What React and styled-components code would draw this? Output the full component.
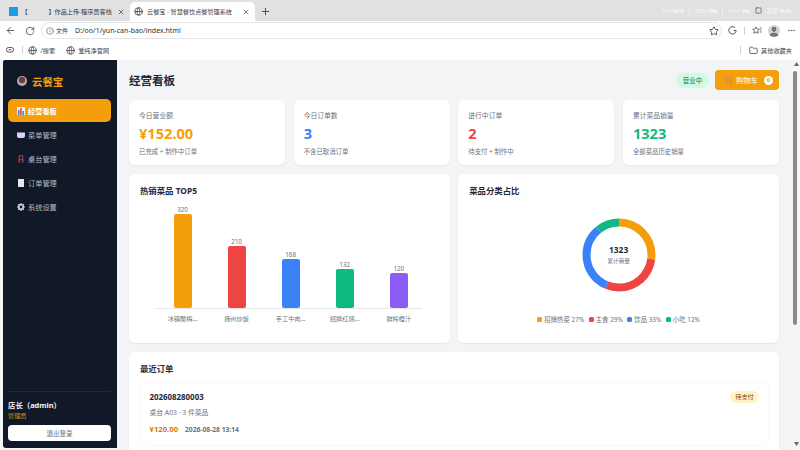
import React from 'react';
import styled, { createGlobalStyle } from 'styled-components';
import { ArrowLeft, RotateCw, Info, Star, X, Plus, MoreHorizontal, Folder, Globe, Square } from 'lucide-react';

const Global = createGlobalStyle`
html, body { margin: 0; padding: 0; background: #fff; }
* { box-sizing: border-box; }
body { font-family: "Noto Sans", "Noto Sans CJK SC", sans-serif; }
`;

const Frame = styled.div`
width: 800px;
height: 450px;
overflow: hidden;
display: flex;
flex-direction: column;
background: #f3f4f6;
`;

const TabBar = styled.div`
height: 21px;
flex: none;
background: #e1e1e1;
display: flex;
align-items: flex-end;
color: #3a3a3a;
font-size: 6.15px;
`;

const Tab = styled.div`
width: ${p => p.$w}px;
height: 19px;
flex: none;
display: flex;
align-items: center;
padding: 0 5px 0 ${p => p.$pad}px;
background: ${p => (p.$active ? '#fff' : 'transparent')};
border-radius: 5px 5px 0 0;
span { flex: 1; white-space: pre; }
`;

const Favicon = styled.i`
width: 8.5px;
height: 9px;
flex: none;
margin-right: 4px;
background: #1e9be8;
`;

const NewTab = styled.div`
margin: 0 0 4px 5px;
display: flex;
color: #444;
`;

const Hud = styled.div`
margin-left: auto;
align-self: center;
display: flex;
align-items: center;
gap: 5px;
padding-right: 9px;
color: #f7f7f7;
font-size: 5.8px;
b { font-weight: 700; }
`;

const HudLine = styled.i`
width: 1px;
height: 8px;
background: #f0f0f0;
`;

const Toolbar = styled.div`
height: 19px;
flex: none;
background: #fff;
display: flex;
align-items: center;
color: #555;
padding: 0 4px 0 5px;
`;

const AddressBar = styled.div`
width: 681px;
height: 17px;
margin-left: 6px;
border: 1px solid #e6e6e6;
border-radius: 9px;
display: flex;
align-items: center;
padding: 0 2px 0 4px;
font-size: 7px;
color: #333;
small { font-size: 6px; margin: 0 7px 0 2px; }
svg:last-child { margin-left: auto; }
`;

const ToolIcons = styled.div`
flex: 1;
display: flex;
align-items: center;
justify-content: space-between;
padding: 0 0 0 6px;
`;

const Divider = styled.i`
width: 1px;
height: ${p => p.$h || 8}px;
background: #cfcfcf;
flex: none;
`;

const Avatar = styled.div`
width: 12px;
height: 12px;
border-radius: 50%;
background: radial-gradient(circle at 50% 36%, #777 0 2.4px, transparent 2.6px),
  radial-gradient(circle at 50% 100%, #777 0 4.4px, transparent 4.6px), #d4d4d4;
`;

const Bookmarks = styled.div`
height: 20px;
flex: none;
background: #fff;
display: flex;
align-items: center;
gap: 5px;
padding: 0 8px 0 6px;
font-size: 6.2px;
color: #444;
`;

const Bookmark = styled.div`
display: flex;
align-items: center;
gap: 3.5px;
margin-right: ${p => p.$mr || 0}px;
`;

const Page = styled.div`
flex: 1;
min-height: 0;
display: flex;
padding-left: 2.5px;
`;

const Sidebar = styled.aside`
width: 114.5px;
height: 388px;
flex: none;
background: #111827;
border-radius: 2px 0 0 3px;
padding: 11px 6px 7px 5.5px;
display: flex;
flex-direction: column;
color: #d1d5db;
`;

const Brand = styled.div`
height: 20px;
display: flex;
align-items: center;
gap: 5px;
padding-left: 9px;
margin-bottom: 8px;
color: #f59e0b;
font-size: 10.4px;
font-weight: 700;
`;

const Nav = styled.nav`
display: flex;
flex-direction: column;
gap: 1px;
`;

const NavItem = styled.div`
height: 23px;
display: flex;
align-items: center;
gap: 3px;
padding-left: 9px;
border-radius: 5px;
font-size: 7.2px;
font-weight: ${p => (p.$active ? 700 : 400)};
color: ${p => (p.$active ? '#fff' : '#b6bcc6')};
background: ${p => (p.$active ? '#f59e0b' : 'transparent')};
`;

const SidebarFoot = styled.div`
margin-top: auto;
border-top: 1px solid #1f2937;
padding-top: 7px;
`;

const UserName = styled.div`
font-size: 7.4px;
font-weight: 700;
color: #f3f4f6;
line-height: 12px;
`;

const Role = styled.div`
font-size: 6.2px;
color: #d98c0c;
line-height: 10px;
margin-bottom: 4px;
`;

const Logout = styled.button`
display: block;
width: 100%;
height: 16px;
border: 0;
border-radius: 4px;
background: #fff;
color: #6b7280;
font: 6.5px "Noto Sans", "Noto Sans CJK SC", sans-serif;
padding: 0;
`;

const Main = styled.main`
flex: 1;
min-width: 0;
padding: 10px 14px 0 12px;
display: flex;
flex-direction: column;
`;

const Header = styled.header`
height: 20px;
margin-bottom: 10px;
display: flex;
align-items: center;
gap: 6px;
h1 {
  margin: 0 auto 0 0;
  font-size: 11.5px;
  font-weight: 700;
  color: #1f2937;
}
`;

const OpenPill = styled.div`
width: 33px;
height: 15px;
border-radius: 8px;
background: #d1fae5;
color: #047857;
font-size: 6.5px;
display: flex;
align-items: center;
justify-content: center;
`;

const CartButton = styled.div`
width: 64px;
height: 20px;
border-radius: 4px;
background: #f59e0b;
color: #fff;
font-size: 7.3px;
display: flex;
align-items: center;
justify-content: flex-start;
padding-left: 9px;
gap: 3px;
`;

const CartCount = styled.b`
width: 9px;
height: 9px;
margin-left: 3px;
border-radius: 50%;
background: #fff;
color: #f59e0b;
font-size: 6px;
line-height: 9px;
text-align: center;
`;

const Card = styled.section`
background: #fff;
border-radius: 6px;
box-shadow: 0 1px 2px rgba(17, 24, 39, 0.06);
`;

const StatGrid = styled.div`
display: grid;
grid-template-columns: repeat(4, 1fr);
gap: 8.5px;
margin-bottom: 9px;
`;

const StatCard = styled(Card)`
height: 65px;
padding: 10.5px 10px 0;
display: flex;
flex-direction: column;
`;

const StatLabel = styled.div`
font-size: 6.8px;
line-height: 10px;
color: #6b7280;
`;

const StatValue = styled.div`
font-size: 14.6px;
line-height: 20px;
margin-top: 2.5px;
font-weight: 700;
color: ${p => p.$color};
`;

const StatSub = styled.div`
font-size: 6.4px;
line-height: 10px;
margin-top: 3.5px;
color: #6b7280;
`;

const ChartGrid = styled.div`
display: grid;
grid-template-columns: 1fr 1fr;
gap: 8.5px;
margin-bottom: 8.5px;
`;

const ChartCard = styled(Card)`
height: 169px;
padding: 10px 11px 0;
display: flex;
flex-direction: column;
`;

const CardTitle = styled.h2`
margin: 0;
font-size: 8.4px;
line-height: 14px;
font-weight: 700;
color: #1f2937;
`;

const Bars = styled.div`
height: 111px;
margin: 0 17px 0 15px;
padding: 0 14px 0 18.5px;
border-bottom: 1px solid #e5e7eb;
display: flex;
align-items: flex-end;
justify-content: space-between;
`;

const BarColumn = styled.div`
width: 18px;
display: flex;
flex-direction: column;
align-items: center;
`;

const BarValue = styled.div`
font-size: 6.2px;
line-height: 9px;
color: #6b7280;
`;

const Bar = styled.div`
width: 18px;
border-radius: 2px;
background: ${p => p.$color};
`;

const BarLabels = styled.div`
margin: 5px 17px 0 15px;
padding: 0 14px 0 18.5px;
display: flex;
justify-content: space-between;
`;

const BarLabel = styled.div`
width: 18px;
display: flex;
justify-content: center;
white-space: nowrap;
font-size: 6.2px;
line-height: 9px;
color: #6b7280;
`;

const DonutWrap = styled.div`
position: relative;
width: 74px;
height: 74px;
margin: 20px auto 0;
`;

const DonutCenter = styled.div`
position: absolute;
inset: 0;
display: flex;
flex-direction: column;
align-items: center;
justify-content: center;
b { font-size: 8.4px; line-height: 12px; color: #1f2937; }
span { font-size: 5.6px; line-height: 9px; margin-top: 1px; color: #6b7280; }
`;

const Legend = styled.div`
margin-top: 23px;
display: flex;
justify-content: center;
gap: 4.5px;
font-size: 6.4px;
line-height: 9px;
color: #6b7280;
`;

const LegendItem = styled.div`
display: flex;
align-items: center;
gap: 2px;
i {
  width: 5px;
  height: 5px;
  border-radius: 1.5px;
  background: ${p => p.$color};
}
`;

const OrdersCard = styled(Card)`
flex: none;
height: 120px;
padding: 10.5px 11px 0;
`;

const OrderRow = styled.div`
margin-top: 6.5px;
height: 62px;
padding: 8px 9px 0 9.5px;
border-radius: 5px;
background: #fff;
box-shadow: 0 0 3px rgba(17, 24, 39, 0.06);
`;

const OrderTop = styled.div`
display: flex;
align-items: center;
justify-content: space-between;
height: 13px;
b { font-size: 7.9px; color: #1f2937; }
`;

const OrderBadge = styled.span`
width: 29px;
height: 12px;
border-radius: 6px;
background: #fef3c7;
color: #92400e;
font-size: 6.2px;
line-height: 12px;
text-align: center;
`;

const OrderMeta = styled.div`
margin-top: 4px;
font-size: 6.8px;
line-height: 10px;
color: #6b7280;
`;

const OrderFoot = styled.div`
margin-top: 6px;
display: flex;
align-items: baseline;
gap: 7px;
b { font-size: 7.7px; color: #d97706; }
span { font-size: 6.7px; font-weight: 700; color: #6b7280; }
`;

const Scrollbar = styled.div`
width: 7px;
height: 390px;
flex: none;
background: #f6f6f7;
display: flex;
flex-direction: column;
align-items: flex-start;
padding-top: 2px;
`;

const ScrollThumb = styled.div`
width: 4px;
height: 254px;
margin: 5px 0 0 0;
border-radius: 2px;
background: #8a8a8a;
`;

const ScrollArrow = styled.svg`
width: 5px;
height: 4px;
margin-left: 1px;
fill: #666;
margin-top: ${p => p.$mt || 0}px;
`;

const stats = [
  { label: '今日营业额', value: '¥152.00', sub: '已完成 + 制作中订单', color: '#f59e0b' },
  { label: '今日订单数', value: '3', sub: '不含已取消订单', color: '#3b82f6' },
  { label: '进行中订单', value: '2', sub: '待支付 + 制作中', color: '#ef4444' },
  { label: '累计菜品销量', value: '1323', sub: '全部菜品历史销量', color: '#10b981' },
];

const dishes = [
  { name: '冰镇酸梅...', count: 320, color: '#f59e0b' },
  { name: '扬州炒饭', count: 210, color: '#ef4444' },
  { name: '手工牛肉...', count: 168, color: '#3b82f6' },
  { name: '招牌红烧...', count: 132, color: '#10b981' },
  { name: '鲜榨橙汁', count: 120, color: '#8b5cf6' },
];

const categories = [
  { name: '招牌热菜', pct: 27, color: '#f59e0b' },
  { name: '主食', pct: 29, color: '#ef4444' },
  { name: '饮品', pct: 33, color: '#3b82f6' },
  { name: '小吃', pct: 12, color: '#10b981' },
];

const NavIcon = ({ kind }) => {
  switch (kind) {
    case 'chart':
      return (
        <svg width="8" height="8" viewBox="0 0 8 8">
          <rect width="8" height="8" fill="#eef2f7" />
          <rect x="1" y="3" width="1.6" height="5" fill="#3b82f6" />
          <rect x="3.2" y="1" width="1.6" height="7" fill="#ef4444" />
          <rect x="5.4" y="4" width="1.6" height="4" fill="#10b981" />
        </svg>
      );
    case 'bento':
      return (
        <svg width="8" height="8" viewBox="0 0 8 8">
          <path d="M0 1.5h8v3.5a2 2 0 0 1-2 2H2a2 2 0 0 1-2-2z" fill="#d8d4f0" />
        </svg>
      );
    case 'chair':
      return (
        <svg width="8" height="8" viewBox="0 0 8 8" fill="none" stroke="#a8503c" strokeWidth="1">
          <path d="M2 .8h4M2.2 1v4M5.8 1v4M1.6 4.8h4.8M2 5v3M6 5v3" />
        </svg>
      );
    case 'list':
      return (
        <svg width="8" height="8" viewBox="0 0 8 8">
          <rect x="1" y="0" width="6" height="8" fill="#e5e7eb" />
        </svg>
      );
    default:
      return (
        <svg width="8" height="8" viewBox="0 0 8 8">
          <circle cx="4" cy="4" r="2.2" fill="none" stroke="#d9d6e6" strokeWidth="1.6" />
          <path d="M4 0v1.5M4 6.5V8M0 4h1.5M6.5 4H8M1.2 1.2l1 1M5.8 5.8l1 1M6.8 1.2l-1 1M2.2 5.8l-1 1" stroke="#d9d6e6" strokeWidth="1.2" />
        </svg>
      );
  }
};

const navItems = [
  { kind: 'chart', label: '经营看板', active: true },
  { kind: 'bento', label: '菜单管理' },
  { kind: 'chair', label: '桌台管理' },
  { kind: 'list', label: '订单管理' },
  { kind: 'gear', label: '系统设置' },
];

const Donut = () => {
  const r = 32.5;
  const total = 2 * Math.PI * r;
  let used = 0;
  return (
    <svg width="74" height="74" viewBox="0 0 74 74">
      {categories.map(c => {
        // percentages are rounded and add up to 101, so the last slice gets clipped
        const share = (Math.min(c.pct, 100 - used) / 100) * total;
        const seg = (
          <circle
            key={c.name}
            cx="37"
            cy="37"
            r={r}
            fill="none"
            stroke={c.color}
            strokeWidth="8"
            strokeDasharray={`${share} ${total - share}`}
            strokeDashoffset={-used / 100 * total}
            transform="rotate(-90 37 37)"
          />
        );
        used += c.pct;
        return seg;
      })}
    </svg>
  );
};

export default function App() {
  return (
    <Frame>
      <Global />
      <TabBar>
        <Tab $w={130} $pad={9}>
          <Favicon />
          <span>【             】作品上传-程序员客栈</span>
          <X size={8} />
        </Tab>
        <Tab $w={125} $pad={4} $active>
          <Globe size={9} style={{ marginRight: 4 }} />
          <span>云餐宝 - 智慧餐饮点餐管理系统</span>
          <X size={8} />
        </Tab>
        <NewTab><Plus size={11} /></NewTab>
        <Hud>
          <span>FPS <b>N/A</b></span>
          <HudLine />
          <span>GPU <b>0%</b></span>
          <HudLine />
          <span>CPU <b>4%</b></span>
          <Square size={7} color="#444" />
          <span>延迟 <b>N/A</b></span>
        </Hud>
      </TabBar>
      <Toolbar>
        <ArrowLeft size={11} />
        <RotateCw size={10} style={{ marginLeft: 9 }} />
        <AddressBar>
          <Info size={8} color="#666" />
          <small>文件</small>
          D:/oo/1/yun-can-bao/index.html
          <Star size={10} />
        </AddressBar>
        <ToolIcons>
          <svg width="9" height="9" viewBox="0 0 9 9" fill="none" stroke="#555" strokeWidth="1">
            <path d="M7 1.6A3.7 3.7 0 1 0 8.2 4.5H5.6" />
          </svg>
          <Divider />
          <svg width="10" height="9" viewBox="0 0 10 9" fill="none" stroke="#555" strokeWidth=".8">
            <path d="M4 .8l1 2.3 2.4.2-1.8 1.6.6 2.4L4 6 1.8 7.3l.6-2.4L.6 3.3 3 3.1z" />
            <path d="M7.6 2h2M8 4h1.6M7.6 6h2" />
          </svg>
          <Avatar />
          <MoreHorizontal size={9} />
        </ToolIcons>
      </Toolbar>
      <Bookmarks>
        <svg width="8" height="8" viewBox="0 0 8 8" fill="none" stroke="#555" strokeWidth="1" style={{ marginRight: 3 }}>
          <rect x=".5" y="1.5" width="7" height="4.5" rx="2" />
          <path d="M2.5 3.7h3" />
        </svg>
        <Divider />
        <Bookmark $mr={5.5}><Globe size={9} />/搜索</Bookmark>
        <Bookmark><Globe size={9} />爱纯净官网</Bookmark>
        <Divider style={{ marginLeft: 'auto', marginRight: 3 }} />
        <Bookmark><Folder size={9} />其他收藏夹</Bookmark>
      </Bookmarks>
      <Page>
        <Sidebar>
          <Brand>
            <svg width="10" height="10" viewBox="0 0 10 10">
              <circle cx="5" cy="5" r="5" fill="#b9aeb8" />
              <circle cx="5" cy="4" r="3.2" fill="#6e3f3a" />
            </svg>
            云餐宝
          </Brand>
          <Nav>
            {navItems.map(n => (
              <NavItem key={n.label} $active={n.active}>
                <NavIcon kind={n.kind} />
                {n.label}
              </NavItem>
            ))}
          </Nav>
          <SidebarFoot>
            <UserName>店长（admin）</UserName>
            <Role>管理员</Role>
            <Logout>退出登录</Logout>
          </SidebarFoot>
        </Sidebar>
        <Main>
          <Header>
            <h1>经营看板</h1>
            <OpenPill>营业中</OpenPill>
            <CartButton>
              <svg width="9" height="9" viewBox="0 0 9 9" fill="none" stroke="#c98a4a" strokeWidth="1">
                <path d="M.5 1h1.3l1 5h4.4l1-3.6H2.2" />
                <circle cx="3.4" cy="7.8" r=".6" />
                <circle cx="6.8" cy="7.8" r=".6" />
              </svg>
              购物车
              <CartCount>0</CartCount>
            </CartButton>
          </Header>
          <StatGrid>
            {stats.map(s => (
              <StatCard key={s.label}>
                <StatLabel>{s.label}</StatLabel>
                <StatValue $color={s.color}>{s.value}</StatValue>
                <StatSub>{s.sub}</StatSub>
              </StatCard>
            ))}
          </StatGrid>
          <ChartGrid>
            <ChartCard>
              <CardTitle>热销菜品 TOP5</CardTitle>
              <Bars>
                {dishes.map(d => (
                  <BarColumn key={d.name}>
                    <BarValue>{d.count}</BarValue>
                    <Bar $color={d.color} style={{ height: d.count * 0.294 }} />
                  </BarColumn>
                ))}
              </Bars>
              <BarLabels>
                {dishes.map(d => <BarLabel key={d.name}>{d.name}</BarLabel>)}
              </BarLabels>
            </ChartCard>
            <ChartCard>
              <CardTitle>菜品分类占比</CardTitle>
              <DonutWrap>
                <Donut />
                <DonutCenter>
                  <b>1323</b>
                  <span>累计销量</span>
                </DonutCenter>
              </DonutWrap>
              <Legend>
                {categories.map(c => (
                  <LegendItem key={c.name} $color={c.color}>
                    <i />{c.name} {c.pct}%
                  </LegendItem>
                ))}
              </Legend>
            </ChartCard>
          </ChartGrid>
          <OrdersCard>
            <CardTitle>最近订单</CardTitle>
            <OrderRow>
              <OrderTop>
                <b>202608280003</b>
                <OrderBadge>待支付</OrderBadge>
              </OrderTop>
              <OrderMeta>桌台 A03 · 3 件菜品</OrderMeta>
              <OrderFoot>
                <b>¥120.00</b>
                <span>2026-08-28 13:14</span>
              </OrderFoot>
            </OrderRow>
          </OrdersCard>
        </Main>
        <Scrollbar>
          <ScrollArrow viewBox="0 0 5 4"><path d="M2.5 0 5 4H0z" /></ScrollArrow>
          <ScrollThumb />
          <ScrollArrow viewBox="0 0 5 4" $mt={117}><path d="M0 0h5L2.5 4z" /></ScrollArrow>
        </Scrollbar>
      </Page>
    </Frame>
  );
}
